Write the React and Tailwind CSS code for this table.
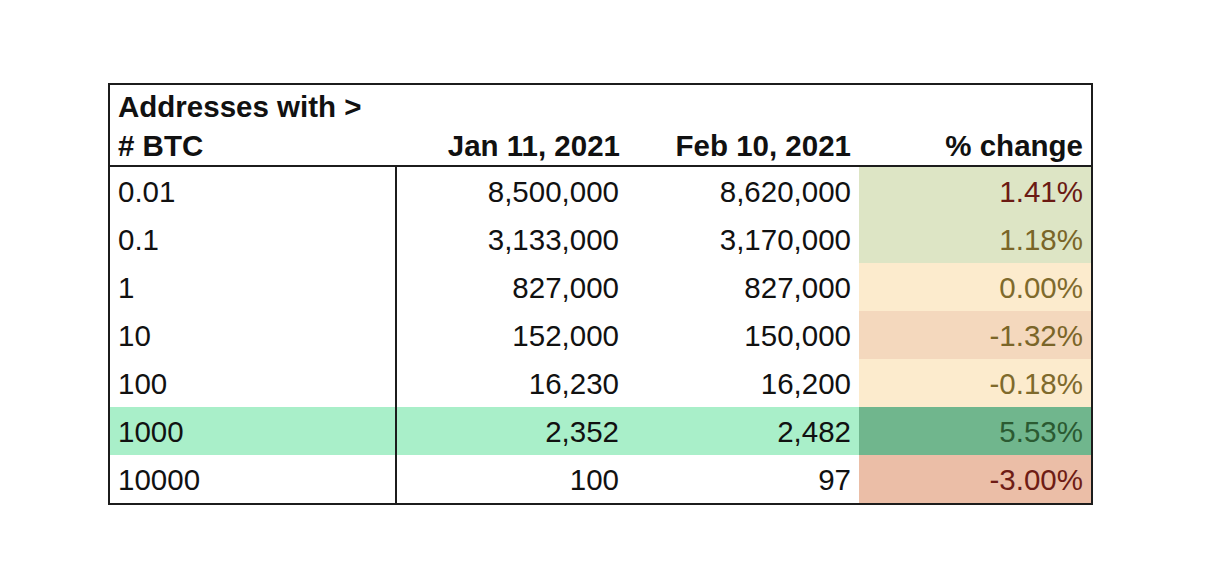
const rows = [
  { n: "0.01", jan: "8,500,000", feb: "8,620,000", pct: "1.41%", bg: "bg-[#dde5c5]", fg: "text-[#6b1a13]" },
  { n: "0.1", jan: "3,133,000", feb: "3,170,000", pct: "1.18%", bg: "bg-[#dde5c5]", fg: "text-[#7a6528]" },
  { n: "1", jan: "827,000", feb: "827,000", pct: "0.00%", bg: "bg-[#fcebcd]", fg: "text-[#7f6a2c]" },
  { n: "10", jan: "152,000", feb: "150,000", pct: "-1.32%", bg: "bg-[#f4d8bd]", fg: "text-[#7a6528]" },
  { n: "100", jan: "16,230", feb: "16,200", pct: "-0.18%", bg: "bg-[#fcebcd]", fg: "text-[#7f6a2c]" },
  { n: "1000", jan: "2,352", feb: "2,482", pct: "5.53%", bg: "bg-[#70b68d]", fg: "text-[#2b5a32]", hl: true },
  { n: "10000", jan: "100", feb: "97", pct: "-3.00%", bg: "bg-[#ebbea7]", fg: "text-[#6e1c15]" },
];

const App = () => {
  return (
    <div
      className="min-h-screen bg-white pt-[83px] pl-[108px] text-[#111] text-[29.5px] leading-[39px]"
      style={{ fontFamily: '"Liberation Sans", Arial, sans-serif' }}
    >
      <div className="w-[985px] border-2 border-[#1c1c1c]">
        {/* header: dates sit on the second line of the first cell */}
        <div className="grid grid-cols-[287px_231px_231px_232px] border-b-2 border-[#1c1c1c] font-bold h-[82px]">
          <div className="px-[8px] pt-[2px]">
            Addresses with &gt;
            <br /># BTC
          </div>
          <div className="text-right pr-[8px] pt-[41px]">Jan 11, 2021</div>
          <div className="text-right pr-[8px] pt-[41px]">Feb 10, 2021</div>
          <div className="text-right pr-[8px] pt-[41px]">% change</div>
        </div>
        {rows.map((r) => (
          <div
            key={r.n}
            className={`grid grid-cols-[287px_231px_231px_232px] h-[48px] ${r.hl ? "bg-[#a9efc9]" : ""}`}
          >
            <div className="flex items-center pl-[8px] border-r-2 border-[#1c1c1c]">{r.n}</div>
            <div className="flex items-center justify-end pr-[9px]">{r.jan}</div>
            <div className="flex items-center justify-end pr-[8px]">{r.feb}</div>
            <div className={`flex items-center justify-end pr-[8px] ${r.bg} ${r.fg}`}>{r.pct}</div>
          </div>
        ))}
      </div>
    </div>
  );
};

export default App;
